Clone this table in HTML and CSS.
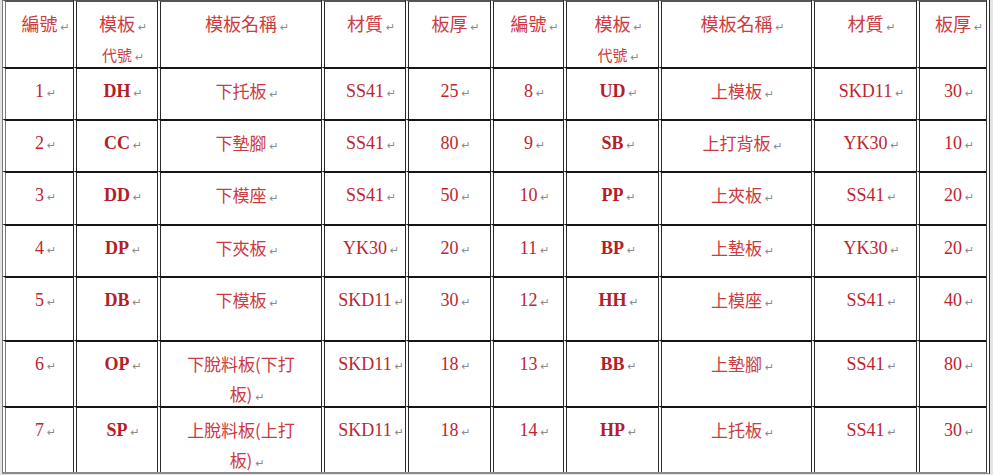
FILE: index.html
```html
<!DOCTYPE html>
<html lang="zh-Hant">
<head>
<meta charset="utf-8">
<title>模板一覽</title>
<link rel="stylesheet" href="styles.css">
</head>
<body>
<div class="sheet">
  <div class="row r-head">
    <div class="cell cjk-h">編號<span class="pm">↵</span></div>
    <div class="cell cjk-h">模板<span class="pm">↵</span><br><span class="sub">代號</span><span class="pm">↵</span></div>
    <div class="cell cjk-h">模板名稱<span class="pm">↵</span></div>
    <div class="cell cjk-h">材質<span class="pm">↵</span></div>
    <div class="cell cjk-h">板厚<span class="pm">↵</span></div>
    <div class="cell cjk-h">編號<span class="pm">↵</span></div>
    <div class="cell cjk-h">模板<span class="pm">↵</span><br><span class="sub">代號</span><span class="pm">↵</span></div>
    <div class="cell cjk-h">模板名稱<span class="pm">↵</span></div>
    <div class="cell cjk-h">材質<span class="pm">↵</span></div>
    <div class="cell cjk-h">板厚<span class="pm">↵</span></div>
  </div>

  <div class="row r-52">
    <div class="cell num">1<span class="pm">↵</span></div>
    <div class="cell code">DH<span class="pm">↵</span></div>
    <div class="cell cjk">下托板<span class="pm">↵</span></div>
    <div class="cell num">SS41<span class="pm">↵</span></div>
    <div class="cell num">25<span class="pm">↵</span></div>
    <div class="cell num">8<span class="pm">↵</span></div>
    <div class="cell code">UD<span class="pm">↵</span></div>
    <div class="cell cjk">上模板<span class="pm">↵</span></div>
    <div class="cell num">SKD11<span class="pm">↵</span></div>
    <div class="cell num">30<span class="pm">↵</span></div>
  </div>

  <div class="row r-52">
    <div class="cell num">2<span class="pm">↵</span></div>
    <div class="cell code">CC<span class="pm">↵</span></div>
    <div class="cell cjk">下墊腳<span class="pm">↵</span></div>
    <div class="cell num">SS41<span class="pm">↵</span></div>
    <div class="cell num">80<span class="pm">↵</span></div>
    <div class="cell num">9<span class="pm">↵</span></div>
    <div class="cell code">SB<span class="pm">↵</span></div>
    <div class="cell cjk">上打背板<span class="pm">↵</span></div>
    <div class="cell num">YK30<span class="pm">↵</span></div>
    <div class="cell num">10<span class="pm">↵</span></div>
  </div>

  <div class="row r-53">
    <div class="cell num">3<span class="pm">↵</span></div>
    <div class="cell code">DD<span class="pm">↵</span></div>
    <div class="cell cjk">下模座<span class="pm">↵</span></div>
    <div class="cell num">SS41<span class="pm">↵</span></div>
    <div class="cell num">50<span class="pm">↵</span></div>
    <div class="cell num">10<span class="pm">↵</span></div>
    <div class="cell code">PP<span class="pm">↵</span></div>
    <div class="cell cjk">上夾板<span class="pm">↵</span></div>
    <div class="cell num">SS41<span class="pm">↵</span></div>
    <div class="cell num">20<span class="pm">↵</span></div>
  </div>

  <div class="row r-52">
    <div class="cell num">4<span class="pm">↵</span></div>
    <div class="cell code">DP<span class="pm">↵</span></div>
    <div class="cell cjk">下夾板<span class="pm">↵</span></div>
    <div class="cell num">YK30<span class="pm">↵</span></div>
    <div class="cell num">20<span class="pm">↵</span></div>
    <div class="cell num">11<span class="pm">↵</span></div>
    <div class="cell code">BP<span class="pm">↵</span></div>
    <div class="cell cjk">上墊板<span class="pm">↵</span></div>
    <div class="cell num">YK30<span class="pm">↵</span></div>
    <div class="cell num">20<span class="pm">↵</span></div>
  </div>

  <div class="row r-64">
    <div class="cell num">5<span class="pm">↵</span></div>
    <div class="cell code">DB<span class="pm">↵</span></div>
    <div class="cell cjk">下模板<span class="pm">↵</span></div>
    <div class="cell num">SKD11<span class="pm">↵</span></div>
    <div class="cell num">30<span class="pm">↵</span></div>
    <div class="cell num">12<span class="pm">↵</span></div>
    <div class="cell code">HH<span class="pm">↵</span></div>
    <div class="cell cjk">上模座<span class="pm">↵</span></div>
    <div class="cell num">SS41<span class="pm">↵</span></div>
    <div class="cell num">40<span class="pm">↵</span></div>
  </div>

  <div class="row r-66">
    <div class="cell num">6<span class="pm">↵</span></div>
    <div class="cell code">OP<span class="pm">↵</span></div>
    <div class="cell cjk">下脫料板(下打<br>板)<span class="pm">↵</span></div>
    <div class="cell num">SKD11<span class="pm">↵</span></div>
    <div class="cell num">18<span class="pm">↵</span></div>
    <div class="cell num">13<span class="pm">↵</span></div>
    <div class="cell code">BB<span class="pm">↵</span></div>
    <div class="cell cjk">上墊腳<span class="pm">↵</span></div>
    <div class="cell num">SS41<span class="pm">↵</span></div>
    <div class="cell num">80<span class="pm">↵</span></div>
  </div>

  <div class="row r-66">
    <div class="cell num">7<span class="pm">↵</span></div>
    <div class="cell code">SP<span class="pm">↵</span></div>
    <div class="cell cjk">上脫料板(上打<br>板)<span class="pm">↵</span></div>
    <div class="cell num">SKD11<span class="pm">↵</span></div>
    <div class="cell num">18<span class="pm">↵</span></div>
    <div class="cell num">14<span class="pm">↵</span></div>
    <div class="cell code">HP<span class="pm">↵</span></div>
    <div class="cell cjk">上托板<span class="pm">↵</span></div>
    <div class="cell num">SS41<span class="pm">↵</span></div>
    <div class="cell num">30<span class="pm">↵</span></div>
  </div>
</div>
</body>
</html>
```

FILE: styles.css
```css
html, body {
  margin: 0;
  padding: 0;
  background: #ffffff;
}

body {
  width: 993px;
  height: 475px;
  overflow: hidden;
  background: #e4e4e4;
}

.sheet {
  margin-left: 2px;
  width: 988px;
  box-sizing: border-box;
  background: #ffffff;
  border-right: 4px double #333;
  border-bottom: 2px solid #8a8a8a;
}

.row {
  display: grid;
  grid-template-columns: 71px 84px 164px 84px 85px 73px 95px 153px 105px 70px;
}

.r-head { height: 67px; }
.r-52 { height: 52px; }
.r-53 { height: 53px; }
.r-64 { height: 64px; }
.r-66 { height: 66px; }

.cell {
  box-sizing: border-box;
  border-left: 4px double #2a2a2a;
  border-top: 2px solid #151515;
  padding-top: 7px;
  text-align: center;
  line-height: 30px;
  color: #bd2530;
  white-space: nowrap;
  overflow: hidden;
}

.row .cell:first-child {
  border-left-color: #7a7a7a;
}

.r-head .cell {
  border-top-color: #555;
}

.cjk-h {
  font-family: "Noto Sans CJK TC", "Noto Sans CJK SC", sans-serif;
  font-size: 18px;
  color: #cc3a42;
  padding-top: 6px;
}

.cjk {
  font-family: "Noto Sans CJK TC", "Noto Sans CJK SC", sans-serif;
  font-size: 17px;
  color: #cc3a42;
}

.sub {
  font-size: 15px;
}

.num {
  font-family: "Liberation Serif", "DejaVu Serif", serif;
  font-size: 18px;
}

.code {
  font-family: "Liberation Serif", "DejaVu Serif", serif;
  font-size: 18px;
  font-weight: bold;
  color: #b41e28;
}

.pm {
  display: inline-block;
  width: 0;
  white-space: nowrap;
  font-family: "DejaVu Sans", sans-serif;
  font-size: 11px;
  font-weight: normal;
  color: #8a8a8a;
  text-indent: 3px;
  line-height: 1;
}
```
